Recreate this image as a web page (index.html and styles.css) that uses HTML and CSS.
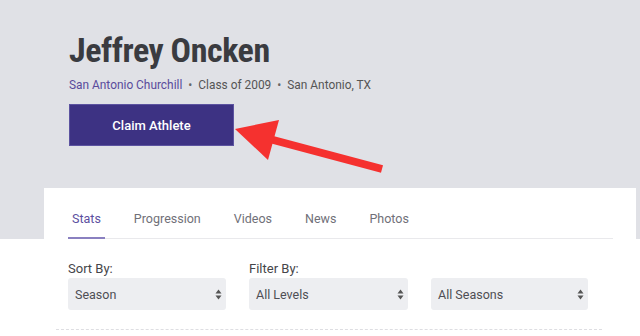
FILE: index.html
```html
<!DOCTYPE html>
<html lang="en">
<head>
  <meta charset="UTF-8" />
  <meta name="viewport" content="width=device-width, initial-scale=1.0" />
  <title>Jeffrey Oncken</title>
  <link rel="stylesheet" href="styles.css">
</head>
<body>
  <header class="hero">
    <h1 class="athlete-name">Jeffrey Oncken</h1>
    <p class="athlete-meta">
      <a href="#" class="school">San Antonio Churchill</a>
      <span class="dot">•</span>
      <span>Class of 2009</span>
      <span class="dot">•</span>
      <span>San Antonio, TX</span>
    </p>
    <button class="claim-btn">Claim Athlete</button>
  </header>

  <section class="card">
    <nav class="tabs">
      <a href="#" class="tab active">Stats</a>
      <a href="#" class="tab">Progression</a>
      <a href="#" class="tab">Videos</a>
      <a href="#" class="tab">News</a>
      <a href="#" class="tab">Photos</a>
    </nav>

    <div class="filters">
      <div class="field">
        <label>Sort By:</label>
        <div class="select"><span>Season</span>
          <svg width="7" height="11" viewBox="0 0 7 11"><path d="M3.5 0.5 L6.5 4.5 H0.5 Z M3.5 10.5 L6.5 6.5 H0.5 Z" fill="#555"/></svg>
        </div>
      </div>
      <div class="field">
        <label>Filter By:</label>
        <div class="select"><span>All Levels</span>
          <svg width="7" height="11" viewBox="0 0 7 11"><path d="M3.5 0.5 L6.5 4.5 H0.5 Z M3.5 10.5 L6.5 6.5 H0.5 Z" fill="#555"/></svg>
        </div>
      </div>
      <div class="field">
        <label>&nbsp;</label>
        <div class="select"><span>All Seasons</span>
          <svg width="7" height="11" viewBox="0 0 7 11"><path d="M3.5 0.5 L6.5 4.5 H0.5 Z M3.5 10.5 L6.5 6.5 H0.5 Z" fill="#555"/></svg>
        </div>
      </div>
    </div>
    <div class="divider"></div>
  </section>

  <!-- annotation arrow over the screenshot -->
  <svg class="annotation" width="640" height="336" viewBox="0 0 640 336">
    <line x1="262" y1="137" x2="382" y2="169" stroke="#f5312f" stroke-width="8"/>
    <polygon points="235,129 279,120 268,160" fill="#f5312f"/>
  </svg>
</body>
</html>
```

FILE: styles.css
```css
body {
  margin: 0;
  background: #fff;
  font-family: Roboto, "Liberation Sans", sans-serif;
  position: relative;
  overflow: hidden;
}
.hero {
  background: #e0e1e6;
  height: 239px;
  padding: 28px 0 0 69px;
  box-sizing: border-box;
}
.athlete-name {
  margin: 0;
  font-size: 34px;
  font-weight: 700;
  font-stretch: 75%;
  letter-spacing: -0.45px;
  color: #3a3b40;
  line-height: 44px;
}
.athlete-meta {
  margin: 5px 0 0;
  font-size: 11.9px;
  color: #555;
  line-height: 16px;
  display: flex;
  gap: 6px;
}
.school {
  color: #5a4b9c;
  text-decoration: none;
}
.dot {
  color: #666;
}
.claim-btn {
  margin-top: 11px;
  width: 165px;
  height: 42px;
  background: #3d3283;
  border: 1px solid #5c53a0;
  color: #fff;
  font-family: Roboto, "Liberation Sans", sans-serif;
  font-size: 13px;
  font-weight: 500;
}
.card {
  background: #fff;
  margin: -51px 0 0 44px;
  width: 592px;
  position: relative;
  padding: 0 23px 0 24px;
  box-sizing: border-box;
  height: 148px;
}
.tabs {
  display: flex;
  gap: 25px;
  height: 51px;
  border-bottom: 1px solid #e9e9ec;
  box-sizing: border-box;
}
.tab {
  font-size: 12.5px;
  color: #707078;
  text-decoration: none;
  padding: 23px 4px 0;
  height: 51px;
  line-height: 16px;
  box-sizing: border-box;
}
.tab.active {
  color: #5b4fa0;
  border-bottom: 2px solid #8a80c0;
}
.filters {
  display: grid;
  grid-template-columns: 158px 159px 157px;
  gap: 23px;
  margin-top: 22px;
}
.field label {
  display: block;
  font-size: 13px;
  color: #454549;
  line-height: 16px;
  margin-bottom: 1px;
}
.select {
  height: 32px;
  background: #edeef1;
  border-radius: 3px;
  display: flex;
  align-items: center;
  justify-content: space-between;
  padding: 0 4px 0 7px;
  font-size: 12.5px;
  color: #4e4e54;
}
.divider {
  border-top: 1px dashed #dedee2;
  margin: 19px 11px 0 -12px;
}
.annotation {
  position: absolute;
  top: 0;
  left: 0;
  pointer-events: none;
}
```
